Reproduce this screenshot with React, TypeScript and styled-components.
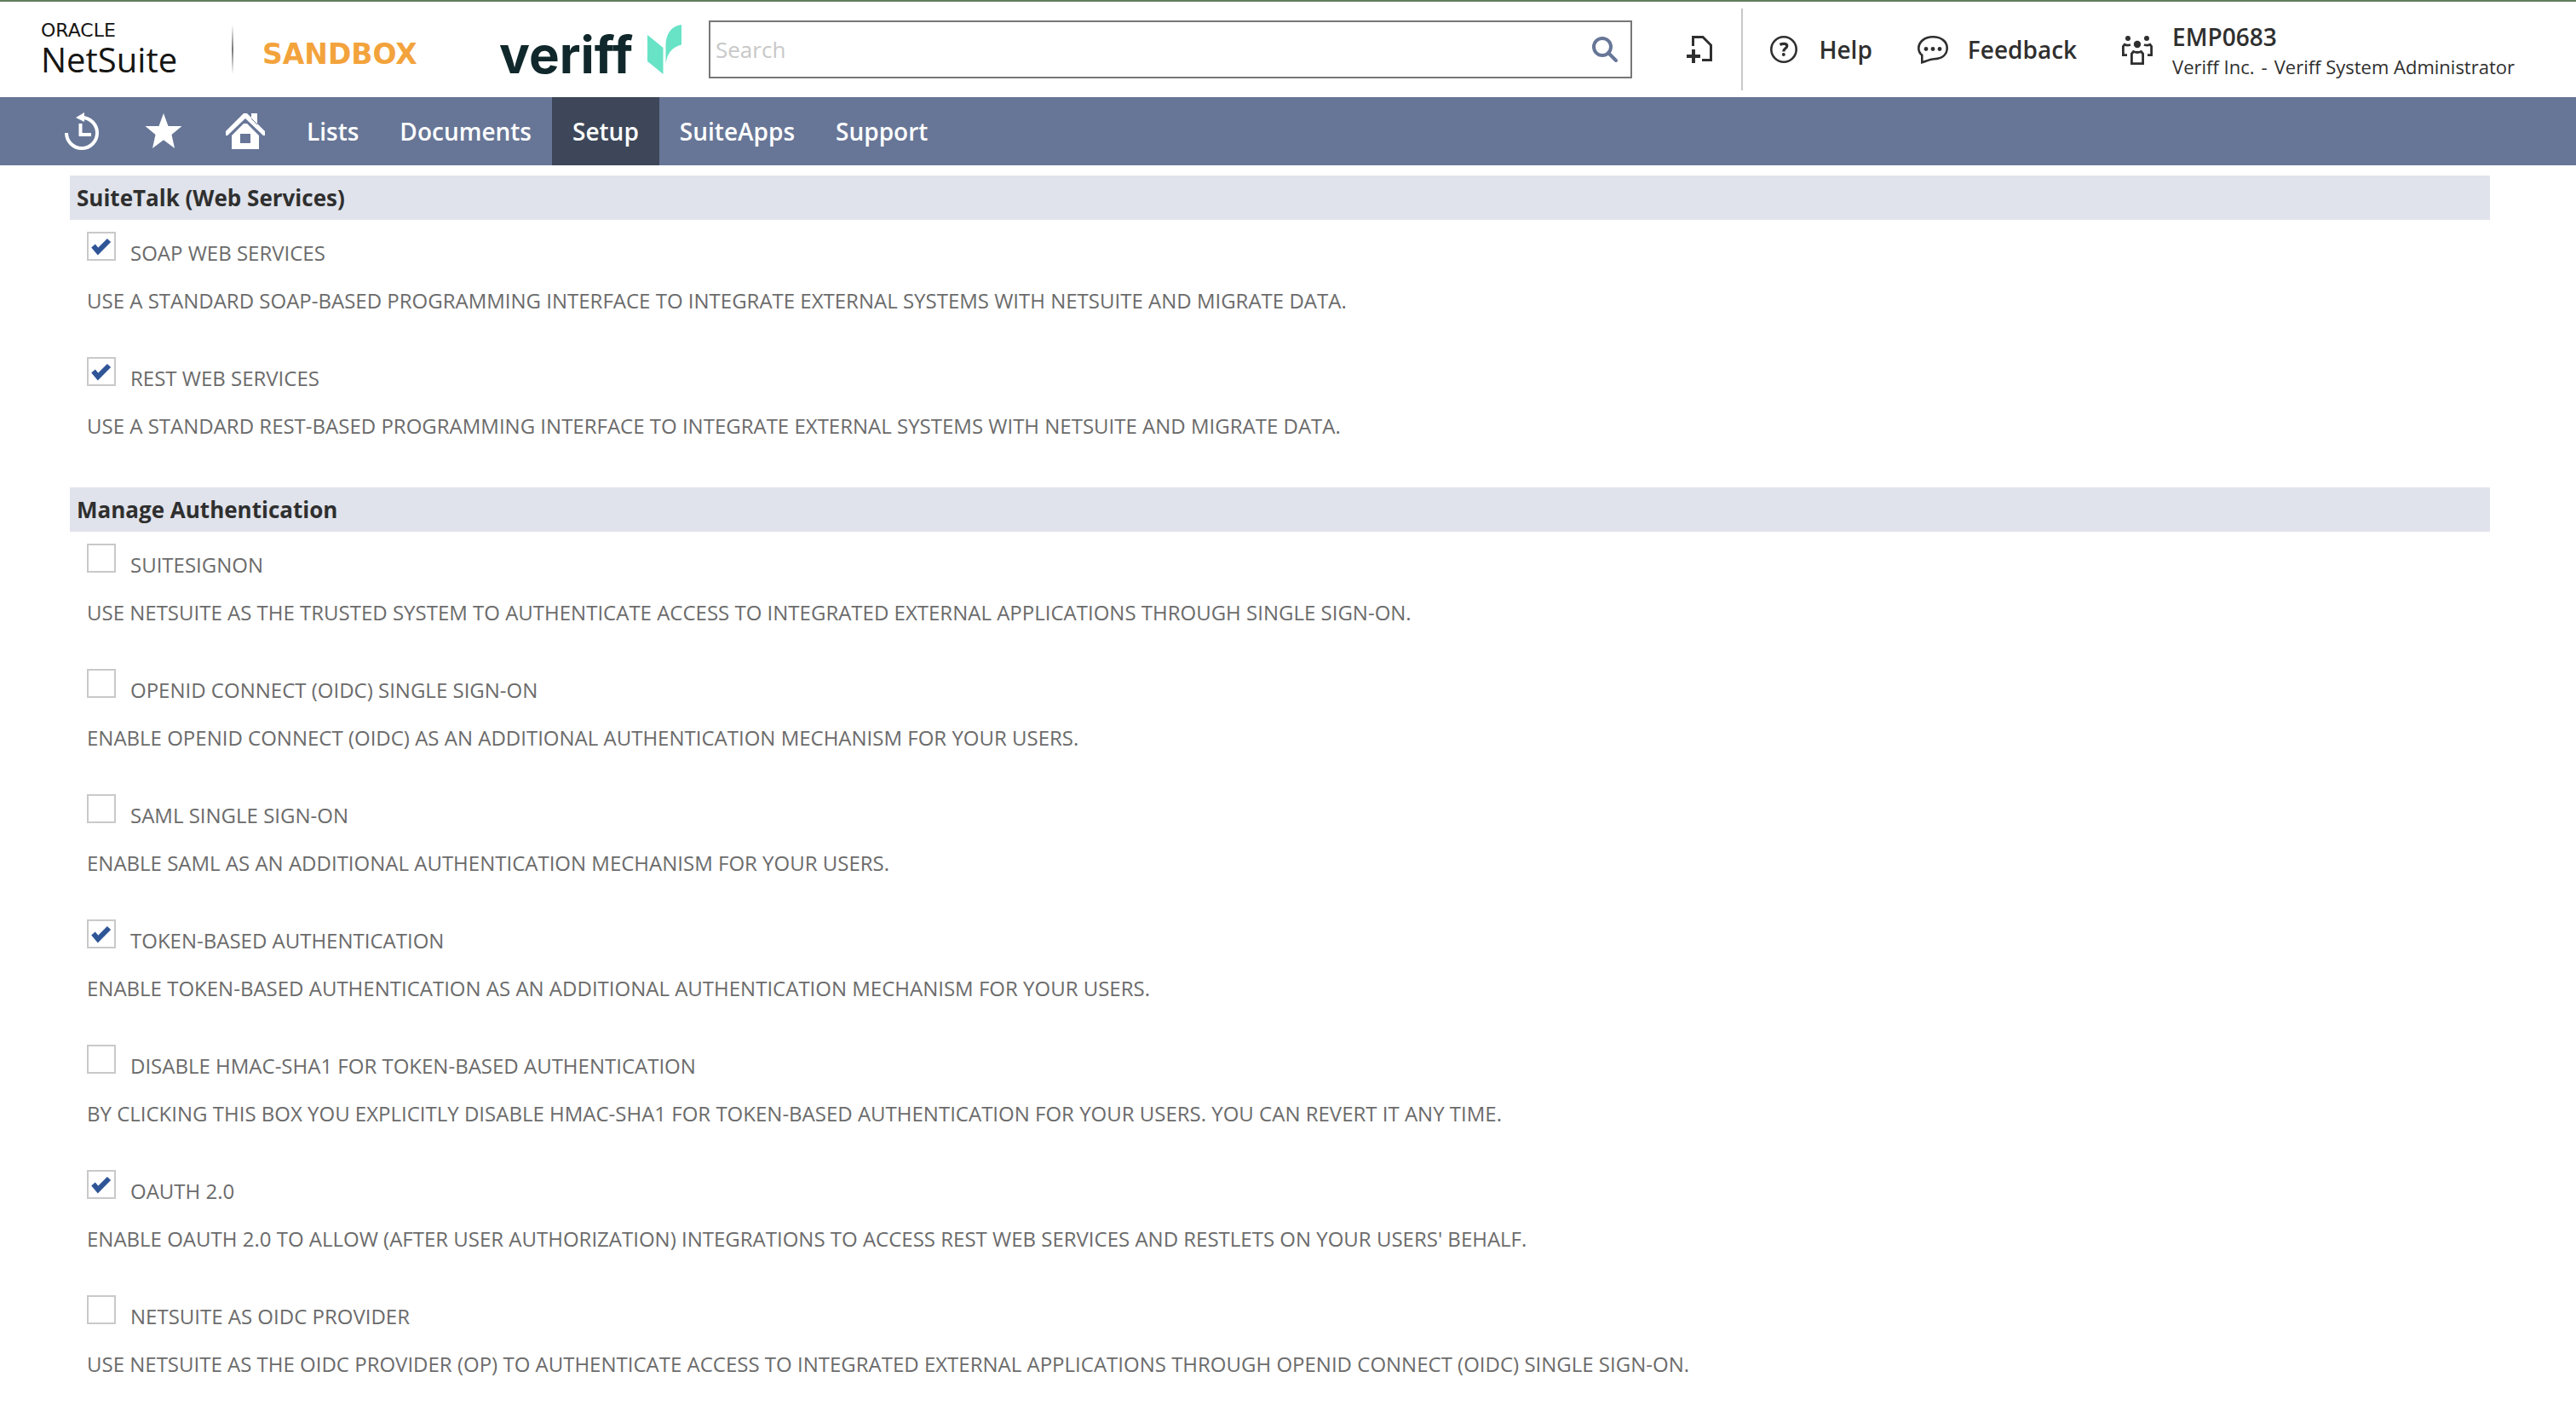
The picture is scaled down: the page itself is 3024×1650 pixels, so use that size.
import React, { useState } from "react";
import styled, { createGlobalStyle } from "styled-components";

const sans = `"Open Sans", "Noto Sans", sans-serif`;

const GlobalStyle = createGlobalStyle`
  *, *::before, *::after { box-sizing: border-box; }
  body {
    margin: 0;
    background: #fff;
    color: #2f2f2f;
    font-family: ${sans};
  }
  button, input { font-family: inherit; }
`;

/* ---------- Header ---------- */

const Header = styled.header`
  display: flex;
  align-items: center;
  height: 114px;
  padding: 0 72px 0 48px;
  border-top: 2px solid #617d5d;
`;

const ProductLogo = styled.a`
  display: flex;
  flex-direction: column;
  width: 224px;
  color: #161513;
  text-decoration: none;
`;

const ProductVendor = styled.span`
  font: 400 22px/24px "DejaVu Sans", sans-serif;
`;

const ProductName = styled.span`
  font-size: 40px;
  line-height: 44px;
`;

const FadedRule = styled.span`
  width: 2px;
  height: 58px;
  background: linear-gradient(#fff, #777 50%, #fff);
`;

const Environment = styled.span`
  width: 312px;
  padding: 12px 0 0 34px;
  color: #f3a33c;
  font: 700 33px/40px "DejaVu Sans", Verdana, sans-serif;
`;

const CompanyLogo = styled.a`
  display: flex;
  align-items: center;
  justify-content: space-between;
  width: 214px;
  margin-right: 32px;
  color: #10282b;
  text-decoration: none;
`;

const CompanyName = styled.span`
  padding-top: 12px;
  font: 700 60px/72px Inter, sans-serif;
`;

const SearchForm = styled.form`
  display: flex;
  flex: 1;
  min-width: 0;
  height: 68px;
  border: 2px solid #777;
`;

const SearchInput = styled.input`
  flex: 1;
  min-width: 0;
  padding: 0 6px;
  border: 0;
  outline: 0;
  background: transparent;
  color: #2f2f2f;
  font-size: 26px;
  &::placeholder { color: #c8c8c8; opacity: 1; }
`;

const IconButton = styled.button`
  display: flex;
  align-items: center;
  justify-content: center;
  padding: 0;
  border: 0;
  background: transparent;
  color: inherit;
  cursor: pointer;
`;

const SearchButton = styled(IconButton)`
  width: 60px;
  color: #677697;
`;

const AddButton = styled(IconButton)`
  margin: 0 31px 0 61px;
`;

const Rule = styled.span`
  width: 2px;
  height: 96px;
  background: #c8c8c8;
`;

const Tools = styled.div`
  display: flex;
  align-items: center;
  gap: 53px;
  margin-left: 30px;
`;

const ToolButton = styled(IconButton)`
  gap: 23px;
  font-size: 28px;
  font-weight: 600;
  line-height: 38px;
  white-space: nowrap;
`;

const Account = styled.span`
  display: flex;
  flex-direction: column;
  padding-top: 4px;
  text-align: left;
`;

const AccountName = styled.span`
  line-height: 36px;
`;

const AccountRole = styled.span`
  display: flex;
  gap: 8px;
  font-size: 22px;
  font-weight: 400;
  line-height: 34px;
`;

/* ---------- Navigation ---------- */

const Nav = styled.nav`
  display: flex;
  height: 80px;
  padding-left: 48px;
  background: #677697;
`;

const NavIcon = styled.a`
  display: flex;
  align-items: center;
  justify-content: center;
  width: 96px;
  color: #fff;
`;

const NavItem = styled.a<{ $active?: boolean }>`
  padding: 0 24px;
  background: ${(p) => (p.$active ? "#3d4759" : "transparent")};
  color: #fff;
  font-size: 28px;
  font-weight: 600;
  line-height: 80px;
  text-decoration: none;
`;

/* ---------- Feature settings ---------- */

const Main = styled.main`
  display: flex;
  flex-direction: column;
  gap: 55px;
  padding: 12px 101px 24px 82px;
`;

const SectionTitle = styled.h2`
  margin: 0;
  padding: 0 8px;
  background: #e0e3eb;
  font-size: 26px;
  font-weight: 700;
  line-height: 52px;
`;

const FeatureList = styled.div`
  display: flex;
  flex-direction: column;
  gap: 49px;
  padding: 14px 20px 0;
`;

const FeatureItem = styled.div`
  color: #6b6b6b;
  font-size: 24px;
  line-height: 34px;
`;

const FeatureHead = styled.div`
  display: flex;
  align-items: flex-start;
  gap: 17px;
`;

const tick = `url("data:image/svg+xml,%3Csvg xmlns='http://www.w3.org/2000/svg' viewBox='0 0 30 30'%3E%3Cpath d='M5.500 14.500L11 21L24 8' fill='none' stroke='%232f5597' stroke-width='6'/%3E%3C/svg%3E")`;

const Checkbox = styled.input`
  appearance: none;
  flex: none;
  width: 34px;
  height: 34px;
  margin: 0;
  border: 2px solid #c9c9c9;
  background: #fff center / 30px 30px no-repeat;
  cursor: pointer;
  &:checked { background-image: ${tick}; }
`;

const FeatureLabel = styled.label`
  padding-top: 8px;
  text-transform: uppercase;
  cursor: pointer;
`;

const FeatureText = styled.p`
  margin: 22px 0 0;
  text-transform: uppercase;
`;

/* ---------- Icons ---------- */

const LeafMark = () => (
  <svg width="40" height="58" viewBox="0 0 40 58" fill="#68e3c6" aria-hidden="true">
    <path d="M0 12L18.500 27V58L0 43Z" />
    <path d="M40 0V23.500C29 26 23 34 21.500 46V23C22 10 29 1 40 0Z" />
  </svg>
);

const SearchIcon = () => (
  <svg width="30" height="30" viewBox="0 0 30 30" fill="none" stroke="currentColor" strokeWidth="4" aria-hidden="true">
    <circle cx="12" cy="12" r="10" />
    <path d="M19 19L28 28" strokeLinecap="round" />
  </svg>
);

const AddIcon = () => (
  <svg width="36" height="36" viewBox="0 0 36 36" fill="none" stroke="currentColor" strokeWidth="3" aria-hidden="true">
    <path d="M10.500 14V3.500H22L31.500 13V30.500H21" />
    <path d="M3 26H19M11 18V34" strokeWidth="4" />
  </svg>
);

const HelpIcon = () => (
  <svg width="36" height="36" viewBox="0 0 36 36" fill="none" stroke="currentColor" aria-hidden="true">
    <circle cx="18" cy="18" r="14.700" strokeWidth="2.600" />
    <path d="M13.500 12.500C17 10.500 21.800 11 21.800 14C21.800 17 17.800 16.800 17.800 20.500" strokeWidth="3.200" />
    <circle cx="17.800" cy="24" r="2" fill="currentColor" stroke="none" />
  </svg>
);

const FeedbackIcon = () => (
  <svg width="36" height="36" viewBox="0 0 36 36" fill="none" stroke="currentColor" strokeWidth="2.600" aria-hidden="true">
    <path d="M5.300 33.300V24.800C2.500 22.500 1.300 20 1.300 16.800C1.300 9 8.500 3.300 18 3.300C27.500 3.300 34.700 8.500 34.700 16.300C34.700 24 29 28.800 19.500 29.200C14 29.500 9.500 32 5.300 33.300Z" />
    <g fill="currentColor" stroke="none">
      <circle cx="10" cy="17.500" r="2.400" />
      <circle cx="18" cy="17.500" r="2.400" />
      <circle cx="26" cy="17.500" r="2.400" />
    </g>
  </svg>
);

const PeopleIcon = () => (
  <svg width="36" height="36" viewBox="0 0 36 36" fill="none" stroke="currentColor" strokeWidth="2.800" aria-hidden="true">
    <g fill="currentColor" stroke="none">
      <circle cx="7" cy="5" r="3" />
      <circle cx="29" cy="5" r="3" />
      <circle cx="18" cy="12" r="4.200" />
    </g>
    <path d="M10 12.500Q6 14 3 12.300L1.400 14.500V24.600H6" />
    <path d="M26 12.500Q30 14 33 12.300L34.600 14.500V24.600H30" />
    <path d="M11.400 34.600V23L13.500 20.500Q18 22.500 22.500 20.500L24.600 23V34.600Z" />
  </svg>
);

const HistoryIcon = () => (
  <svg width="42" height="44" viewBox="0 0 42 44" fill="none" stroke="#fff" strokeWidth="4" aria-hidden="true">
    <path d="M3 24A18 18 0 1 0 21 6" />
    <path d="M14 6L24 0V11Z" fill="#fff" stroke="none" />
    <path d="M19.500 13V26H32" />
  </svg>
);

const StarIcon = () => (
  <svg width="44" height="42" viewBox="0 0 44 42" fill="#fff" aria-hidden="true">
    <path d="M22 0L27.500 15H43.500L31.500 25L35 41L22 31.200L9 41L12.500 25L.500 15H16.500Z" />
  </svg>
);

const HomeIcon = () => (
  <svg width="46" height="42" viewBox="0 0 46 42" aria-hidden="true">
    <path d="M0 21L21 0H25L30 5V0H37V12L46 21V26H44L23 6L2 26H0Z" fill="#fff" />
    <path d="M30 6L37 13" stroke="#677697" strokeWidth="1" />
    <path d="M7 26L21 12H25L39 26V42H7ZM17 24V35H29V24Z" fill="#fff" fillRule="evenodd" />
  </svg>
);

/* ---------- Data ---------- */

type Feature = { id: string; label: string; text: string; on: boolean };
type Section = { title: string; features: Feature[] };

const sections: Section[] = [
  {
    title: "SuiteTalk (Web Services)",
    features: [
      { id: "soap", on: true, label: "SOAP Web Services", text: "Use a standard SOAP-based programming interface to integrate external systems with NetSuite and migrate data." },
      { id: "rest", on: true, label: "REST Web Services", text: "Use a standard REST-based programming interface to integrate external systems with NetSuite and migrate data." },
    ],
  },
  {
    title: "Manage Authentication",
    features: [
      { id: "suitesignon", on: false, label: "SuiteSignOn", text: "Use NetSuite as the trusted system to authenticate access to integrated external applications through single sign-on." },
      { id: "oidc", on: false, label: "OpenID Connect (OIDC) Single Sign-on", text: "Enable OpenID Connect (OIDC) as an additional authentication mechanism for your users." },
      { id: "saml", on: false, label: "SAML Single Sign-on", text: "Enable SAML as an additional authentication mechanism for your users." },
      { id: "tba", on: true, label: "Token-based Authentication", text: "Enable token-based authentication as an additional authentication mechanism for your users." },
      { id: "hmac", on: false, label: "Disable HMAC-SHA1 for Token-based Authentication", text: "By clicking this box you explicitly disable HMAC-SHA1 for token-based authentication for your users. You can revert it any time." },
      { id: "oauth", on: true, label: "OAuth 2.0", text: "Enable OAuth 2.0 to allow (after user authorization) integrations to access REST web services and RESTlets on your users' behalf." },
      { id: "provider", on: false, label: "NetSuite as OIDC Provider", text: "Use NetSuite as the OIDC Provider (OP) to authenticate access to integrated external applications through OpenID Connect (OIDC) single sign-on." },
    ],
  },
];

const menu = ["Lists", "Documents", "Setup", "SuiteApps", "Support"];

function FeatureRow({ feature }: { feature: Feature }) {
  const [on, setOn] = useState(feature.on);
  return (
    <FeatureItem>
      <FeatureHead>
        <Checkbox id={feature.id} type="checkbox" checked={on} onChange={(e) => setOn(e.target.checked)} />
        <FeatureLabel htmlFor={feature.id}>{feature.label}</FeatureLabel>
      </FeatureHead>
      <FeatureText>{feature.text}</FeatureText>
    </FeatureItem>
  );
}

export default function App() {
  return (
    <>
      <GlobalStyle />
      <Header>
        <ProductLogo href="#">
          <ProductVendor>ORACLE</ProductVendor>
          <ProductName>NetSuite</ProductName>
        </ProductLogo>
        <FadedRule />
        <Environment>SANDBOX</Environment>
        <CompanyLogo href="#">
          <CompanyName>veriff</CompanyName>
          <LeafMark />
        </CompanyLogo>
        <SearchForm role="search" onSubmit={(e) => e.preventDefault()}>
          <SearchInput type="text" placeholder="Search" aria-label="Search" />
          <SearchButton type="submit" aria-label="Run search"><SearchIcon /></SearchButton>
        </SearchForm>
        <AddButton type="button" aria-label="Create new"><AddIcon /></AddButton>
        <Rule />
        <Tools>
          <ToolButton type="button"><HelpIcon />Help</ToolButton>
          <ToolButton type="button"><FeedbackIcon />Feedback</ToolButton>
          <ToolButton type="button">
            <PeopleIcon />
            <Account>
              <AccountName>EMP0683</AccountName>
              <AccountRole>
                <span>Veriff Inc.</span>
                <span>-</span>
                <span>Veriff System Administrator</span>
              </AccountRole>
            </Account>
          </ToolButton>
        </Tools>
      </Header>
      <Nav aria-label="Main">
        <NavIcon href="#" aria-label="Recent records"><HistoryIcon /></NavIcon>
        <NavIcon href="#" aria-label="Shortcuts"><StarIcon /></NavIcon>
        <NavIcon href="#" aria-label="Home"><HomeIcon /></NavIcon>
        {menu.map((name) => (
          <NavItem key={name} href="#" $active={name === "Setup"}>{name}</NavItem>
        ))}
      </Nav>
      <Main>
        {sections.map((section) => (
          <section key={section.title}>
            <SectionTitle>{section.title}</SectionTitle>
            <FeatureList>
              {section.features.map((f) => <FeatureRow key={f.id} feature={f} />)}
            </FeatureList>
          </section>
        ))}
      </Main>
    </>
  );
}
